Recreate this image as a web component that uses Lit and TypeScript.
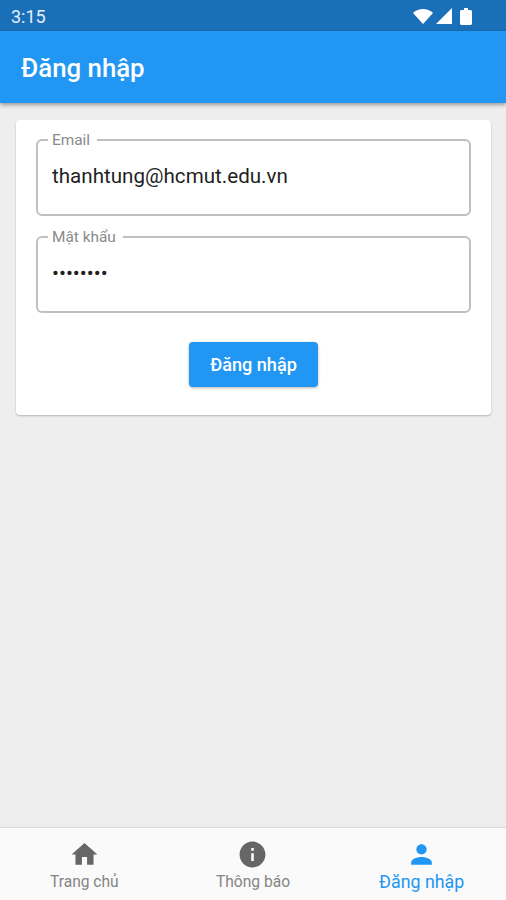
import { LitElement, css, html } from "lit";
import { customElement } from "lit/decorators.js";

const navItems = [
  { label: "Trang chủ", icon: "home", active: false },
  { label: "Thông báo", icon: "info", active: false },
  { label: "Đăng nhập", icon: "person", active: true },
];

const icons: Record<string, ReturnType<typeof html>> = {
  home: html`<svg viewBox="0 0 24 24"><path d="M10 20v-6h4v6h5v-8h3L12 3 2 12h3v8z" /></svg>`,
  info: html`<svg viewBox="0 0 24 24"><path d="M12 2C6.48 2 2 6.48 2 12s4.48 10 10 10 10-4.48 10-10S17.52 2 12 2zm1 15h-2v-6h2v6zm0-8h-2V7h2v2z" /></svg>`,
  person: html`<svg viewBox="0 0 24 24"><path d="M12 12c2.21 0 4-1.79 4-4s-1.79-4-4-4-4 1.79-4 4 1.79 4 4 4zm0 2c-2.67 0-8 1.34-8 4v2h16v-2c0-2.66-5.33-4-8-4z" /></svg>`,
};

@customElement("app-root")
export class AppRoot extends LitElement {
  static styles = css`
    :host {
      display: flex;
      flex-direction: column;
      height: 900px;
      background: #eeeeee;
      font-family: Roboto, "Liberation Sans", sans-serif;
    }

    .status {
      height: 31px;
      display: flex;
      align-items: center;
      justify-content: space-between;
      padding: 1px 34px 0 11px;
      box-sizing: border-box;
      background: #1a70b8;
      color: #e3eef8;
      font-size: 18px;
    }

    .status-icons {
      display: flex;
      align-items: center;
      gap: 3px;
    }

    .status-icons svg {
      display: block;
      fill: #fff;
    }

    .appbar {
      height: 72px;
      display: flex;
      align-items: center;
      padding: 2px 21px 0;
      box-sizing: border-box;
      background: #2196f3;
      color: #fff;
      font-size: 25.8px;
      font-weight: 500;
      box-shadow: 0 2px 4px rgba(0, 0, 0, 0.35);
      position: relative;
    }

    .content {
      flex: 1;
      padding: 17px 15px 0 16px;
    }

    .card {
      display: flex;
      flex-direction: column;
      padding: 12px 20px 28px;
      background: #fff;
      border-radius: 4px;
      box-shadow: 0 1px 2px rgba(0, 0, 0, 0.25);
    }

    fieldset {
      height: 84px;
      margin: 0 0 13px;
      padding: 0 10px;
      box-sizing: border-box;
      border: 2px solid #c0c0c0;
      border-radius: 6px;
      min-width: 0;
    }

    legend {
      padding: 0 7px 0 4px;
      color: #8a8a8a;
      font-size: 15.4px;
      line-height: 16px;
    }

    input {
      display: block;
      width: 100%;
      margin-top: 15px;
      padding: 0 0 0 4px;
      box-sizing: border-box;
      border: none;
      outline: none;
      background: none;
      color: #1f1f1f;
      font: 20.6px/26px Roboto, "Liberation Sans", sans-serif;
    }

    .submit {
      align-self: center;
      width: 129px;
      height: 45px;
      margin-top: 16px;
      padding: 0;
      border: none;
      border-radius: 4px;
      background: #2196f3;
      color: #fff;
      font: 500 18.1px Roboto, "Liberation Sans", sans-serif;
      box-shadow: 0 1px 3px rgba(0, 0, 0, 0.3);
    }

    nav {
      height: 72px;
      display: grid;
      grid-template-columns: repeat(3, 1fr);
      background: #fafafa;
      box-shadow: 0 -1px 1px rgba(0, 0, 0, 0.08);
      position: relative;
    }

    .tab {
      display: flex;
      flex-direction: column;
      align-items: center;
      padding-top: 11px;
      color: #858585;
      font-size: 15.6px;
      line-height: 20px;
    }

    .tab svg {
      width: 31px;
      height: 31px;
      fill: #666666;
      margin-bottom: 2px;
    }

    .tab.active {
      color: #2196f3;
      font-size: 17.8px;
      line-height: 19px;
    }

    .tab.active svg {
      fill: #2196f3;
    }
  `;

  render() {
    return html`
      <div class="status">
        <span>3:15</span>
        <div class="status-icons">
          <svg width="20" height="15" viewBox="0 0 20 15"><path d="M0 4C5.5-1.2 14.500-1.200 20 4L10 15z" /></svg>
          <svg width="16" height="16" viewBox="0 0 16 16"><path d="M0 16L16 0v16z" /></svg>
          <svg width="12" height="17" viewBox="0 0 12 17" style="margin-left:5px"><path d="M4 0h4v2h2.500c.8 0 1.500.7 1.500 1.500V15.500c0 .8-.7 1.500-1.500 1.500h-9C.7 17 0 16.300 0 15.500V3.500C0 2.700.7 2 1.500 2H4z" /></svg>
        </div>
      </div>
      <header class="appbar">Đăng nhập</header>
      <main class="content">
        <section class="card">
          <fieldset>
            <legend>Email</legend>
            <input type="text" .value=${"thanhtung@hcmut.edu.vn"} />
          </fieldset>
          <fieldset>
            <legend>Mật khẩu</legend>
            <input type="password" .value=${"12345678"} />
          </fieldset>
          <button class="submit">Đăng nhập</button>
        </section>
      </main>
      <nav>
        ${navItems.map(
          (item) => html`
            <div class="tab ${item.active ? "active" : ""}">
              ${icons[item.icon]}
              <span>${item.label}</span>
            </div>
          `
        )}
      </nav>
    `;
  }
}
